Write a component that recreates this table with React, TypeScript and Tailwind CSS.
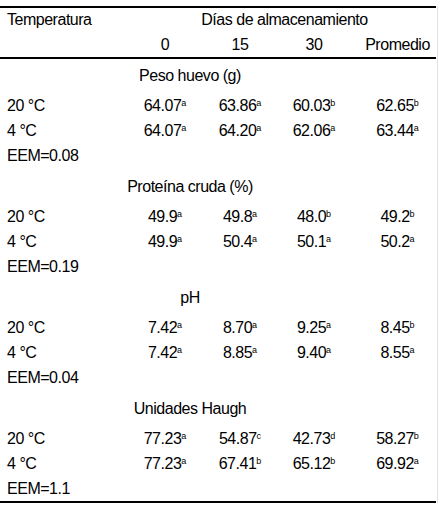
const SECTIONS = [
  {
    title: "Peso huevo (g)",
    rows: [
      { label: "20 °C", values: [["64.07", "a"], ["63.86", "a"], ["60.03", "b"], ["62.65", "b"]] },
      { label: "4 °C", values: [["64.07", "a"], ["64.20", "a"], ["62.06", "a"], ["63.44", "a"]] },
    ],
    eem: "EEM=0.08",
  },
  {
    title: "Proteína cruda (%)",
    rows: [
      { label: "20 °C", values: [["49.9", "a"], ["49.8", "a"], ["48.0", "b"], ["49.2", "b"]] },
      { label: "4 °C", values: [["49.9", "a"], ["50.4", "a"], ["50.1", "a"], ["50.2", "a"]] },
    ],
    eem: "EEM=0.19",
  },
  {
    title: "pH",
    rows: [
      { label: "20 °C", values: [["7.42", "a"], ["8.70", "a"], ["9.25", "a"], ["8.45", "b"]] },
      { label: "4 °C", values: [["7.42", "a"], ["8.85", "a"], ["9.40", "a"], ["8.55", "a"]] },
    ],
    eem: "EEM=0.04",
  },
  {
    title: "Unidades Haugh",
    rows: [
      { label: "20 °C", values: [["77.23", "a"], ["54.87", "c"], ["42.73", "d"], ["58.27", "b"]] },
      { label: "4 °C", values: [["77.23", "a"], ["67.41", "b"], ["65.12", "b"], ["69.92", "a"]] },
    ],
    eem: "EEM=1.1",
  },
];

const GRID = "grid grid-cols-[128px_74px_76px_72px_86px] items-center";

function Value({ num, sup }: { num: string; sup: string }) {
  return (
    <span>
      {num}
      <span className="relative -top-[5px] text-[9px] leading-none tracking-normal">{sup}</span>
    </span>
  );
}

export default function App() {
  return (
    <div
      className="h-[509px] w-[440px] overflow-hidden bg-white pt-[6px] text-[16px] tracking-[-0.03em] text-black"
      style={{ fontFamily: '"Liberation Sans", Arial, sans-serif' }}
    >
      <div className="w-[438px] border-r border-[#e2e2e2]">
        <div className="w-[436px] border-t-2 border-b-2 border-black">
          {/* header */}
          <div className={`${GRID} h-[24px]`}>
            <div className="pl-[7px]">Temperatura</div>
            <div className="col-span-4 pl-[5px] text-center">Días de almacenamiento</div>
          </div>
          <div className={`${GRID} h-[25px] text-center`}>
            <div />
            <div>0</div>
            <div>15</div>
            <div>30</div>
            <div className="pl-[9px]">Promedio</div>
          </div>
        </div>

        <div className="w-[436px] border-b-2 border-black">
          {SECTIONS.map((section, i) => (
            <div key={section.title} className={i < SECTIONS.length - 1 ? "pb-[2px]" : ""}>
              <div className="flex h-[34px] items-center">
                <div className="w-[380px] text-center">{section.title}</div>
              </div>
              {section.rows.map((row) => (
                <div key={row.label} className={`${GRID} h-[25px]`}>
                  <div className="pl-[7px]">{row.label}</div>
                  {row.values.map(([num, sup], j) => (
                    <div key={j} className={j === 3 ? "pl-[9px] text-center" : "text-center"}>
                      <Value num={num} sup={sup} />
                    </div>
                  ))}
                </div>
              ))}
              <div className="flex h-[25px] items-center pl-[7px]">{section.eem}</div>
            </div>
          ))}
        </div>
      </div>
    </div>
  );
}
